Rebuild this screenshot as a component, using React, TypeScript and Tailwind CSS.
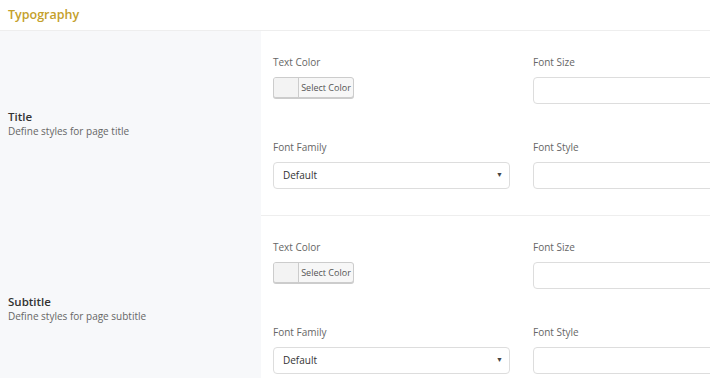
import { ReactNode } from "react"

const font = { fontFamily: '"Open Sans", "Noto Sans", sans-serif' }

function Label({ children }: { children: ReactNode }) {
  return <div className="h-[14px] leading-[14px] text-[10px] text-[#666] mb-[8px]">{children}</div>
}

function ColorButton() {
  return (
    <div className="flex h-[21px] w-[81px] border border-[#ccc] rounded-[3px] bg-[#f7f7f7] shadow-[0_1px_0_#ccc] overflow-hidden">
      <div className="w-[25px] border-r border-[#ccc] bg-[#f3f3f3]" />
      <div className="flex-1 flex items-center justify-center text-[9px] text-[#555]">Select Color</div>
    </div>
  )
}

function TextInput() {
  return <div className="h-[27px] w-[240px] border border-[#ddd] rounded-[4px] bg-white" />
}

function Select() {
  return (
    <div className="h-[27px] w-[237px] border border-[#ddd] rounded-[4px] bg-white flex items-center justify-between pl-[9px] pr-[6px]">
      <span className="text-[10px] text-[#333]">Default</span>
      <span className="text-[7px] text-[#444]">▼</span>
    </div>
  )
}

function Section({ title, desc }: { title: string; desc: string }) {
  return (
    <div className="flex">
      <div className="w-[261px] shrink-0 bg-[#f7f8fa] flex flex-col justify-center pl-[8px]">
        <div className="text-[11.5px] font-semibold text-[#333] leading-[15px]">{title}</div>
        <div className="text-[10px] text-[#666] leading-[15px]">{desc}</div>
      </div>
      <div className="flex-1 border-b border-[#eee] pt-[24px] pb-[26px] pl-[12px]">
        <div className="grid grid-cols-[260px_260px] gap-y-[36px]">
          <div>
            <Label>Text Color</Label>
            <ColorButton />
          </div>
          <div>
            <Label>Font Size</Label>
            <TextInput />
          </div>
          <div>
            <Label>Font Family</Label>
            <Select />
          </div>
          <div>
            <Label>Font Style</Label>
            <TextInput />
          </div>
        </div>
      </div>
    </div>
  )
}

export default function App() {
  return (
    <div className="w-[710px] h-[378px] overflow-hidden bg-white" style={font}>
      <div className="h-[31px] border-b border-[#eee] flex items-center pl-[8px]">
        <span className="text-[12.5px] font-semibold text-[#c4a02a]">Typography</span>
      </div>
      <Section title="Title" desc="Define styles for page title" />
      <Section title="Subtitle" desc="Define styles for page subtitle" />
    </div>
  )
}
